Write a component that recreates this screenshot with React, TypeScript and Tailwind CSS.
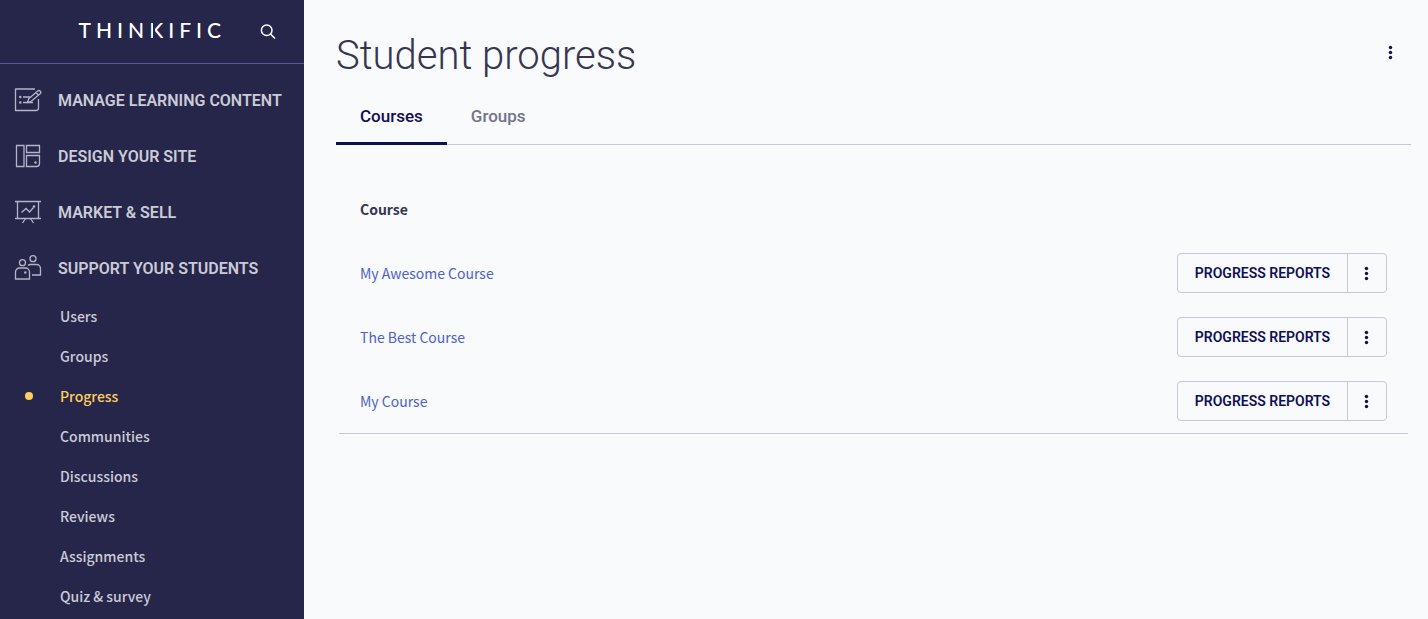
import React from 'react';

interface MenuItem {
  id: string;
  label: string;
  icon: React.FC;
}

const ContentIcon: React.FC = () => (
  <svg width="28" height="28" viewBox="0 0 28 28" fill="none" stroke="#b4b4c8" strokeWidth="1.300" strokeLinejoin="round" aria-hidden="true">
    <path d="M21 3H1.500v21.500H22a2.500 2.500 0 0 0 2.500-2.500V13" />
    <path d="M13.500 16.500l1.200-3.800 9-7.700a1.900 1.900 0 0 1 2.600 0.200a1.900 1.900 0 0 1-0.200 2.600L17 15.600zM22 6.500l2.600 2.800" />
    <path d="M9 11h7M9 16.500h10" />
    <circle cx="6.300" cy="11" r="0.600" />
    <circle cx="6.300" cy="16.500" r="0.600" />
  </svg>
);

const DesignIcon: React.FC = () => (
  <svg width="28" height="28" viewBox="0 0 28 28" fill="none" stroke="#b4b4c8" strokeWidth="1.300" aria-hidden="true">
    <path d="M2.500 3.500h7.500v21H2.500z" />
    <path d="M12.500 3.500h13v7h-13z" />
    <path d="M12.500 13.500h13v8a3 3 0 0 1-3 3h-10z" />
    <circle cx="21.500" cy="20.500" r="0.600" />
  </svg>
);

const MarketIcon: React.FC = () => (
  <svg width="28" height="28" viewBox="0 0 28 28" fill="none" stroke="#b4b4c8" strokeWidth="1.300" aria-hidden="true">
    <path d="M1 3.500h26M1 20.500h26M3.500 3.500v17M24.500 3.500v17" />
    <path d="M7.500 14.500l4.500-4 3.500 3.500 4-4.500" />
    <path d="M11.500 20.500l-3 4.500M16.500 20.500l3 4.500" />
    <circle cx="20" cy="8.500" r="0.700" />
  </svg>
);

const SupportIcon: React.FC = () => (
  <svg width="28" height="28" viewBox="0 0 28 28" fill="none" stroke="#b4b4c8" strokeWidth="1.300" aria-hidden="true">
    <circle cx="19" cy="4.700" r="3" />
    <circle cx="8.500" cy="8.700" r="3" />
    <path d="M1.500 25v-7a4 4 0 0 1 4-4h6a4 4 0 0 1 4 4v7z" />
    <path d="M14 11.500a4 4 0 0 1 2.500-1h6a4 4 0 0 1 4 4V21h-8.500" />
    <circle cx="11.300" cy="18.500" r="0.600" />
  </svg>
);

const SearchIcon: React.FC = () => (
  <svg width="16" height="16" viewBox="0 0 16 16" fill="none" stroke="currentColor" strokeWidth="1.500" aria-hidden="true">
    <circle cx="6.700" cy="6.200" r="5.300" />
    <path d="M10.500 10l4.500 4.500" />
  </svg>
);

const DotsIcon: React.FC = () => (
  <svg width="16" height="16" viewBox="0 0 16 16" fill="currentColor" aria-hidden="true">
    <circle cx="7.500" cy="3.500" r="1.700" />
    <circle cx="7.500" cy="8.500" r="1.700" />
    <circle cx="7.500" cy="13.500" r="1.700" />
  </svg>
);

const menuItems: MenuItem[] = [
  { id: 'content', label: 'MANAGE LEARNING CONTENT', icon: ContentIcon },
  { id: 'design', label: 'DESIGN YOUR SITE', icon: DesignIcon },
  { id: 'market', label: 'MARKET & SELL', icon: MarketIcon },
  { id: 'support', label: 'SUPPORT YOUR STUDENTS', icon: SupportIcon },
];

const supportLinks = [
  'Users',
  'Groups',
  'Progress',
  'Communities',
  'Discussions',
  'Reviews',
  'Assignments',
  'Quiz & survey',
];

const courses = ['My Awesome Course', 'The Best Course', 'My Course'];

const Sidebar: React.FC = () => (
  <aside className="w-[304px] shrink-0 bg-[#26264b] text-[#cbcbd7]">
    <div className="flex h-16 items-center justify-end border-b border-[#5a5e8e] pr-7 text-white">
      <a href="#home" className="mr-[34px] pb-1 font-['Lato',sans-serif] text-[21px] leading-6 font-medium tracking-[5px]">
        THIN
        <span className="relative">
          K
          {/* gap between the stem and the arms of the K */}
          <span className="absolute top-1 left-[4px] h-5 w-0.5 bg-[#26264b]" />
        </span>
        IFIC
      </a>
      <button type="button" aria-label="Search">
        <SearchIcon />
      </button>
    </div>

    <nav className="pt-2">
      {menuItems.map((item) => (
        <a key={item.id} href={`#${item.id}`} className="flex h-14 items-center gap-4 pl-[14px] font-semibold">
          <item.icon />
          <span className="pt-0.5">{item.label}</span>
        </a>
      ))}
      <ul className="font-['Noto_Sans_CJK_SC',sans-serif] text-sm font-medium">
        {supportLinks.map((label) => (
          <li key={label}>
            <a
              href={`#${label.toLowerCase()}`}
              className={`flex h-10 items-center ${label === 'Progress' ? 'text-[#ffce5c]' : ''}`}
            >
              <span className="flex w-[60px] pl-[25px]">
                {label === 'Progress' && <span className="size-2 rounded-full bg-[#ffce5c]" />}
              </span>
              {label}
            </a>
          </li>
        ))}
      </ul>
    </nav>
  </aside>
);

export default function App() {
  const [tab, setTab] = React.useState('Courses');

  return (
    <div className="flex min-h-screen bg-[#f8fafc] font-['Roboto',sans-serif] text-base">
      <Sidebar />

      <main className="min-w-0 flex-1 pt-8 pr-[17px] pl-8">
        <header className="flex items-start justify-between">
          <h1 className="text-[40px] leading-12 font-light text-[#35364f]">Student progress</h1>
          <button type="button" aria-label="More options" className="p-3 text-[#0f0f56]">
            <DotsIcon />
          </button>
        </header>

        <div role="tablist" className="mt-[9px] flex border-b border-[#c8c9d6]">
          {['Courses', 'Groups'].map((name) => (
            <button
              key={name}
              type="button"
              role="tab"
              aria-selected={tab === name}
              onClick={() => setTab(name)}
              className={`-mb-px h-14 border-b-3 px-6 pt-0.5 text-[17px] font-medium ${
                tab === name ? 'border-[#0f0f56] text-[#0f0f56]' : 'border-transparent text-[#73748a]'
              }`}
            >
              {name}
            </button>
          ))}
        </div>

        <div className="mt-8 px-[3px]">
          <table className="w-full border-b border-[#c8c9d6] font-['Noto_Sans_CJK_SC',sans-serif] text-sm">
            <thead>
              <tr className="h-16">
                <th className="px-[21px] text-left font-bold text-[#35364f]">Course</th>
                <td />
              </tr>
            </thead>
            <tbody>
              {courses.map((course) => (
                <tr key={course} className="h-16">
                  <td className="px-[21px]">
                    <a href="#course" className="text-[#4e62c6]">{course}</a>
                  </td>
                  <td className="px-[21px]">
                    <div className="ml-auto flex h-10 w-[210px] rounded border border-[#c8c9d6] font-['Roboto',sans-serif] text-[#0f0f56]">
                      <button type="button" className="flex-1 border-r border-[#c8c9d6] text-sm font-semibold">
                        PROGRESS REPORTS
                      </button>
                      <button type="button" aria-label={`Actions for ${course}`} className="flex w-[38px] items-center justify-center">
                        <DotsIcon />
                      </button>
                    </div>
                  </td>
                </tr>
              ))}
            </tbody>
          </table>
        </div>
      </main>
    </div>
  );
}
